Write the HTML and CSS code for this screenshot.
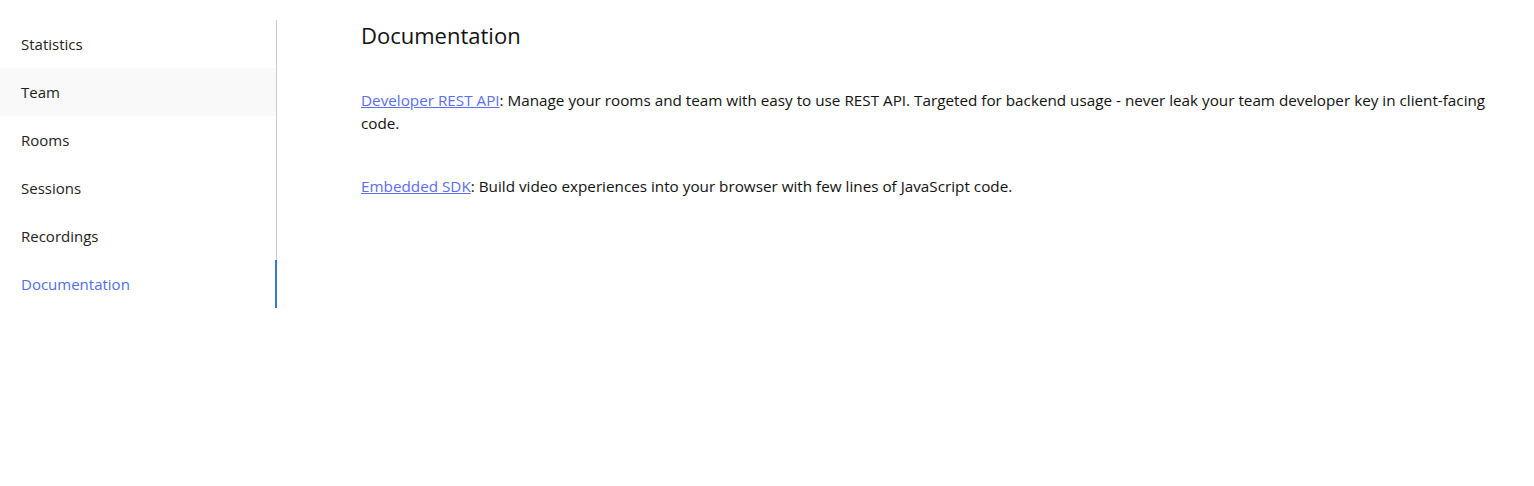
FILE: index.html
```html
<!DOCTYPE html>
<html>
<head>
<meta charset="utf-8">
<link rel="stylesheet" href="styles.css">
</head>
<body>
<div class="layout">
  <nav class="sidebar">
    <a class="nav-item">Statistics</a>
    <a class="nav-item hover">Team</a>
    <a class="nav-item">Rooms</a>
    <a class="nav-item">Sessions</a>
    <a class="nav-item">Recordings</a>
    <a class="nav-item active">Documentation</a>
  </nav>
  <main class="content">
    <h1 class="title">Documentation</h1>
    <p class="para"><a class="link" href="#">Developer REST API</a>: Manage your rooms and team with easy to use REST API. Targeted for backend usage - never leak your team developer key in client-facing code.</p>
    <p class="para"><a class="link" href="#">Embedded SDK</a>: Build video experiences into your browser with few lines of JavaScript code.</p>
  </main>
</div>
</body>
</html>
```
FILE: styles.css
```css
html, body {
  margin: 0;
  padding: 0;
  background: #fff;
}
body {
  font-family: "Open Sans", "Noto Sans", sans-serif;
  color: #1a1a1a;
  font-size: 15px;
}
.layout {
  display: flex;
  align-items: flex-start;
  padding-top: 20px;
}
.sidebar {
  width: 276px;
  flex: none;
  display: flex;
  flex-direction: column;
  border-right: 1px solid #c8c8c8;
}
.nav-item {
  height: 48px;
  display: flex;
  align-items: center;
  padding-left: 21px;
  color: #222;
  font-size: 15px;
}
.nav-item.hover {
  background: #f9f9f9;
}
.nav-item.active {
  color: #4f6fe3;
  box-shadow: inset -2px 0 0 #3b73db;
  margin-right: -1px;
}
.content {
  flex: 1;
  padding-left: 84px;
  padding-right: 30px;
}
.title {
  margin: 0;
  font-size: 22px;
  font-weight: 400;
  color: #111;
  line-height: 30px;
}
.para {
  margin: 0;
  margin-top: 39px;
  line-height: 23px;
  font-size: 15.25px;
  color: #111;
}
.para + .para {
  margin-top: 40px;
}
.link {
  color: #5c6ef0;
  text-decoration: underline;
}
```
